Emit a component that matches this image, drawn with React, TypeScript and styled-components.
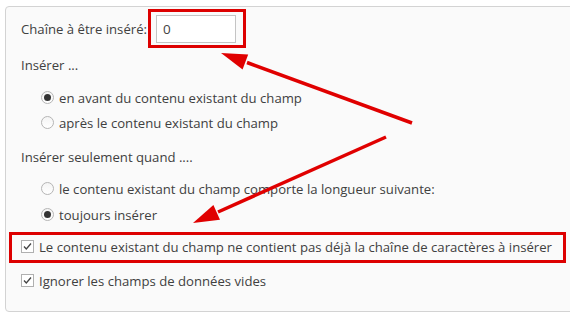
import React from "react";
import styled, { createGlobalStyle } from "styled-components";

const Global = createGlobalStyle`
  html, body { margin: 0; padding: 0; background: #ffffff; }
  body { font-family: "Open Sans", "Noto Sans", Arial, sans-serif; font-size: 13.15px; color: #404040; overflow: hidden; }
`;

const Page = styled.div`
  position: relative;
  width: 570px;
  height: 319px;
  overflow: hidden;
  padding: 6px 0 0 5px;
  box-sizing: border-box;
`;

const Panel = styled.div`
  width: 600px;
  height: 306px;
  box-sizing: border-box;
  border: 1px solid #d3d3d3;
  border-radius: 4px;
  background: #fafafa;
  display: flex;
  flex-direction: column;
  padding-top: 2px;
`;

const Row = styled.div<{ $h: number; $mt?: number; $indent?: number; $gap?: number }>`
  display: flex;
  align-items: center;
  height: ${(p) => p.$h}px;
  margin-top: ${(p) => p.$mt ?? 0}px;
  padding-left: ${(p) => p.$indent ?? 15}px;
  gap: ${(p) => p.$gap ?? 5}px;
  white-space: nowrap;
`;

const Label = styled.span`
  line-height: 20px;
  padding-top: 1px;
`;

const Highlight = styled.div`
  border: 3px solid #dd0000;
  box-sizing: border-box;
  display: flex;
  align-items: center;
`;

const InputFrame = styled(Highlight)`
  width: 98px;
  height: 39px;
  padding: 1px 0 0 5px;
`;

const TextInput = styled.input`
  width: 80px;
  height: 28px;
  box-sizing: border-box;
  border: 1px solid #c4c4c4;
  background: #ffffff;
  padding: 0 6px;
  font: inherit;
  font-size: 13.5px;
  color: #444;
  outline: none;
`;

const CheckFrame = styled(Highlight)`
  width: 557px;
  height: 31px;
  margin: 5px 0 0 3px;
  padding: 0 0 2px 9px;
  gap: 5px;
  white-space: nowrap;
`;

const RadioCircle = styled.span<{ $on?: boolean }>`
  width: 13px;
  height: 13px;
  box-sizing: border-box;
  border-radius: 50%;
  border: 1px solid #b5b5b5;
  background: linear-gradient(#f4f4f4, #ffffff);
  display: flex;
  align-items: center;
  justify-content: center;
  flex: none;
  &::after {
    content: "";
    width: 7px;
    height: 7px;
    border-radius: 50%;
    background: #333;
    display: ${(p) => (p.$on ? "block" : "none")};
  }
`;

const CheckBox = styled.span`
  width: 13px;
  height: 13px;
  box-sizing: border-box;
  border: 1px solid #b0b0b0;
  background: #ffffff;
  display: flex;
  align-items: center;
  justify-content: center;
  flex: none;
`;

const Overlay = styled.svg`
  position: absolute;
  left: 0;
  top: 0;
  pointer-events: none;
`;

const Check = () => (
  <CheckBox>
    <svg width="11" height="11" viewBox="0 0 11 11">
      <path d="M2 5.5 L4.3 8 L9 2.5" fill="none" stroke="#444" strokeWidth="1.3" />
    </svg>
  </CheckBox>
);

export default function App() {
  return (
    <>
      <Global />
      <Page>
        <Panel>
          <Row $h={39} $gap={1}>
            <Label>Chaîne à être inséré:</Label>
            <InputFrame>
              <TextInput defaultValue="0" />
            </InputFrame>
          </Row>
          <Row $h={20} $mt={6}>
            <Label>Insérer ...</Label>
          </Row>
          <Row $h={25} $mt={11} $indent={35}>
            <RadioCircle $on />
            <Label>en avant du contenu existant du champ</Label>
          </Row>
          <Row $h={25} $indent={35}>
            <RadioCircle />
            <Label>après le contenu existant du champ</Label>
          </Row>
          <Row $h={20} $mt={11}>
            <Label>Insérer seulement quand ....</Label>
          </Row>
          <Row $h={26} $mt={9} $indent={35}>
            <RadioCircle />
            <Label>le contenu existant du champ comporte la longueur suivante:</Label>
          </Row>
          <Row $h={26} $indent={35}>
            <RadioCircle $on />
            <Label>toujours insérer</Label>
          </Row>
          <CheckFrame>
            <Check />
            <Label>Le contenu existant du champ ne contient pas déjà la chaîne de caractères à insérer</Label>
          </CheckFrame>
          <Row $h={20} $mt={7}>
            <Check />
            <Label>Ignorer les champs de données vides</Label>
          </Row>
        </Panel>
        <Overlay width="570" height="319" viewBox="0 0 570 319">
          <line x1="412" y1="123" x2="247" y2="62.5" stroke="#e00000" strokeWidth="3.5" />
          <polygon points="221,53 248.2,54.4 242.6,69.4" fill="#e00000" />
          <line x1="386" y1="137" x2="218" y2="212" stroke="#e00000" strokeWidth="3.5" />
          <polygon points="193,223 220,219.7 213.4,205.1" fill="#e00000" />
        </Overlay>
      </Page>
    </>
  );
}
